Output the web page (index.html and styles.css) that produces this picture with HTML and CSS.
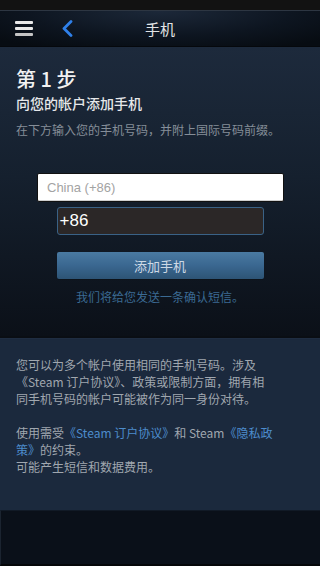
FILE: index.html
```html
<!DOCTYPE html>
<html lang="zh-CN">
<head>
<meta charset="utf-8">
<title>手机</title>
<link rel="stylesheet" href="styles.css">
</head>
<body>
<div class="page">
  <div class="status"></div>
  <header class="header">
    <div class="menu"><span></span><span></span><span></span></div>
    <svg class="back" width="12" height="17" viewBox="0 0 12 17"><path d="M10 1.5 L3 8.5 L10 15.5" fill="none" stroke="#2f80ea" stroke-width="2.8" stroke-linecap="round" stroke-linejoin="round"/></svg>
    <div class="title">手机</div>
  </header>
  <main class="main">
    <h1 class="step">第 1 步</h1>
    <h2 class="subtitle">向您的帐户添加手机</h2>
    <p class="hint">在下方输入您的手机号码，并附上国际号码前缀。</p>
    <div class="form">
      <div class="country">China (+86)</div>
      <div class="phone">+86</div>
      <div class="btn">添加手机</div>
      <div class="note">我们将给您发送一条确认短信。</div>
    </div>
  </main>
  <section class="info">
    <p>您可以为多个帐户使用相同的手机号码。涉及<br>《Steam 订户协议》、政策或限制方面，拥有相<br>同手机号码的帐户可能被作为同一身份对待。</p>
    <p>使用需受<span class="link">《Steam 订户协议》</span>和 Steam<span class="link">《隐私政<br>策》</span>的约束。<br>可能产生短信和数据费用。</p>
  </section>
  <footer class="footer"></footer>
</div>
</body>
</html>
```
FILE: styles.css
```css
* { box-sizing: border-box; }
html, body { margin: 0; padding: 0; background: #0a1019; }
.page {
  width: 320px;
  height: 566px;
  display: flex;
  flex-direction: column;
  font-family: "Noto Sans CJK SC", "Liberation Sans", sans-serif;
  overflow: hidden;
}
.status {
  height: 11px;
  flex: none;
  background: #121212;
  border-bottom: 1px solid #2d3642;
}
.header {
  height: 36px;
  flex: none;
  display: flex;
  align-items: center;
  position: relative;
  background: radial-gradient(ellipse 70% 120% at 50% 0%, #1c2839 0%, #0d1520 60%, #070c12 100%);
  border-bottom: 1px solid #05080c;
}
.menu {
  margin-left: 15px;
  width: 18px;
  display: flex;
  flex-direction: column;
  gap: 3px;
}
.menu span {
  display: block;
  height: 3px;
  border-radius: 1px;
  background: #e8e8e8;
}
.menu span:last-child { background: #c4c4c4; }
.back { margin-left: 28px; }
.title {
  position: absolute;
  left: 0;
  right: 0;
  top: 0;
  bottom: 0;
  display: flex;
  align-items: center;
  justify-content: center;
  font-size: 15px;
  color: #e2e4e6;
  pointer-events: none;
}
.main {
  height: 291px;
  flex: none;
  padding: 20px 16px 0;
  background: linear-gradient(180deg, #1d2a3c 0%, #15202e 45%, #0b1018 100%);
  border-bottom: 2px solid #0a0e14;
}
.step {
  margin: 0;
  font-size: 20px;
  line-height: 24px;
  font-weight: 500;
  color: #f2f2f2;
}
.subtitle {
  margin: 2px 0 0;
  font-size: 14px;
  line-height: 20px;
  font-weight: 500;
  color: #e6e8ea;
}
.hint {
  margin: 9px 0 0;
  font-size: 12px;
  line-height: 16px;
  color: #858e98;
}
.form {
  margin-top: 35px;
  display: flex;
  flex-direction: column;
  align-items: center;
}
.country {
  width: 247px;
  height: 29px;
  margin-left: 1px;
  background: #ffffff;
  border: 1px solid #111;
  border-radius: 2px;
  box-shadow: inset 0 -1px 0 #cfcfcf;
  padding-left: 9px;
  display: flex;
  align-items: center;
  font-family: "Liberation Sans", sans-serif;
  font-size: 13px;
  color: #a3a3a3;
}
.phone {
  width: 207px;
  height: 28px;
  margin-top: 5px;
  background: #2b2727;
  border: 1px solid #3a6286;
  border-radius: 3px;
  padding-left: 2px;
  display: flex;
  align-items: center;
  font-family: "Liberation Sans", sans-serif;
  font-size: 17px;
  color: #ffffff;
}
.btn {
  width: 207px;
  height: 27px;
  margin-top: 17px;
  background: linear-gradient(180deg, #4a7aa2 0%, #3a6790 50%, #2d5475 100%);
  border-radius: 2px;
  box-shadow: 0 1px 0 #0c131b;
  display: flex;
  align-items: center;
  justify-content: center;
  font-size: 13px;
  color: #cdd9e5;
}
.note {
  margin-top: 10px;
  font-size: 12px;
  line-height: 16px;
  color: #3b6a92;
}
.info {
  height: 172px;
  flex: none;
  padding: 17px 30px 0 16px;
  background: #1b293d;
  border-top: 1px solid #1f2d42;
}
.info p {
  margin: 0 0 17px;
  font-size: 12px;
  line-height: 17px;
  color: #a0a7af;
}
.link { color: #4d8ccc; }
.footer {
  flex: 1;
  background: #0a1019;
  border-top: 1px solid #111a26;
  border-left: 1px solid #1b2430;
  border-bottom: 2px solid #050709;
}
```
